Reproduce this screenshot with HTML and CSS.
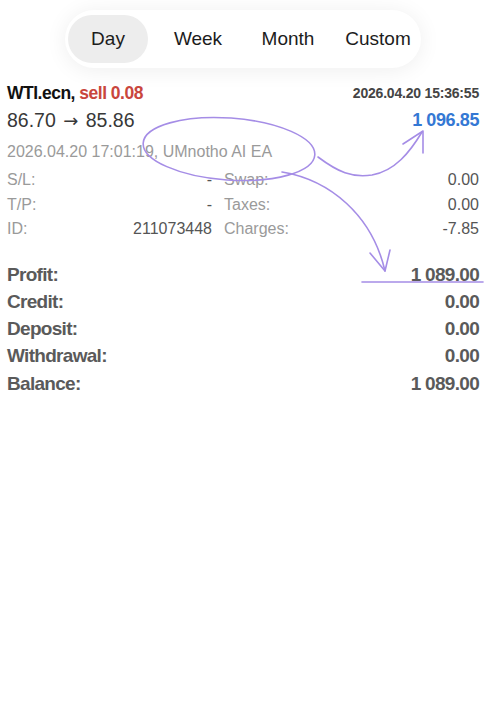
FILE: index.html
```html
<!DOCTYPE html>
<html>
<head>
<meta charset="utf-8">
<link rel="stylesheet" href="styles.css">
</head>
<body>
<div class="page">
  <div class="seg-wrap">
    <div class="seg">
      <div class="seg-item active">Day</div>
      <div class="seg-item">Week</div>
      <div class="seg-item">Month</div>
      <div class="seg-item">Custom</div>
    </div>
  </div>

  <div class="info">
    <div class="row row1">
      <div class="sym">WTI.ecn, <span class="sell">sell 0.08</span></div>
      <div class="date">2026.04.20 15:36:55</div>
    </div>
    <div class="row row2">
      <div class="prices">86.70 <span class="arrow">→</span> 85.86</div>
      <div class="pl">1 096.85</div>
    </div>
    <div class="row3">2026.04.20 17:01:19, UMnotho AI EA</div>

    <div class="details">
      <div class="drow">
        <div class="dl">S/L:</div><div class="dv">-</div>
        <div class="dl2">Swap:</div><div class="dv2">0.00</div>
      </div>
      <div class="drow">
        <div class="dl">T/P:</div><div class="dv">-</div>
        <div class="dl2">Taxes:</div><div class="dv2">0.00</div>
      </div>
      <div class="drow">
        <div class="dl">ID:</div><div class="dv">211073448</div>
        <div class="dl2">Charges:</div><div class="dv2">-7.85</div>
      </div>
    </div>

    <div class="summary">
      <div class="srow"><span>Profit:</span><span>1 089.00</span></div>
      <div class="srow"><span>Credit:</span><span>0.00</span></div>
      <div class="srow"><span>Deposit:</span><span>0.00</span></div>
      <div class="srow"><span>Withdrawal:</span><span>0.00</span></div>
      <div class="srow"><span>Balance:</span><span>1 089.00</span></div>
    </div>
  </div>

  <svg class="annot" width="486" height="720" viewBox="0 0 486 720" fill="none" stroke="#a58de6" stroke-width="1.6" stroke-linecap="round" stroke-linejoin="round">
    <ellipse cx="229" cy="149" rx="86" ry="31" transform="rotate(4 229 149)"/>
    <path d="M318 157 C 338 172, 352 178, 372 175 C 395 171, 410 152, 422 132"/>
    <path d="M403 144 L 423 131 L 423 153"/>
    <path d="M282 172 C 330 180, 372 215, 385 271"/>
    <path d="M370 253 L 385 271 L 390 250"/>
    <path d="M362 282 L 483 282"/>
  </svg>
</div>
</body>
</html>
```

FILE: styles.css
```css
html, body {
  margin: 0;
  padding: 0;
  background: #ffffff;
}

body {
  font-family: "Liberation Sans", Arial, sans-serif;
  color: #333;
}

.page {
  position: relative;
  width: 486px;
  height: 720px;
  overflow: hidden;
}

.seg-wrap {
  padding-top: 10px;
  display: flex;
  justify-content: flex-start;
  padding-left: 65px;
}

.seg {
  display: flex;
  gap: 10px;
  padding: 5px 3px;
  background: #fff;
  border-radius: 29px;
  box-shadow: 0 2px 22px rgba(0, 0, 0, 0.07);
}

.seg-item {
  width: 80px;
  height: 48px;
  line-height: 48px;
  text-align: center;
  font-size: 19px;
  color: #1c1c1c;
  border-radius: 24px;
}

.seg-item.active {
  background: #ededed;
}

.info {
  margin-top: 14px;
  padding: 0 7px;
}

.row {
  display: flex;
  justify-content: space-between;
  align-items: center;
}

.row1 {
  height: 22px;
}

.sym {
  font-size: 17.5px;
  font-weight: bold;
  color: #111;
  letter-spacing: -0.5px;
}

.sell {
  color: #c9463d;
}

.date {
  font-size: 14px;
  font-weight: bold;
  color: #444;
  letter-spacing: -0.2px;
}

.row2 {
  height: 32px;
}

.prices {
  font-size: 19.5px;
  color: #383838;
}

.arrow {
  display: inline-block;
  font-family: "DejaVu Sans", sans-serif;
  font-size: 18px;
  margin: 0 2px;
}

.pl {
  font-size: 18px;
  font-weight: bold;
  color: #3478d4;
  letter-spacing: -0.4px;
}

.row3 {
  margin-top: 4px;
  height: 24px;
  line-height: 24px;
  font-size: 16px;
  color: #9a9a9a;
}

.details {
  margin-top: 4px;
}

.drow {
  display: flex;
  height: 24.5px;
  line-height: 24.5px;
  font-size: 16px;
}

.dl {
  color: #9a9a9a;
  width: 60px;
}

.dv {
  width: 145px;
  text-align: right;
  color: #555;
}

.dl2 {
  margin-left: 12px;
  color: #9a9a9a;
  flex: 1;
}

.dv2 {
  color: #555;
  text-align: right;
}

.summary {
  margin-top: 19px;
}

.srow {
  display: flex;
  justify-content: space-between;
  height: 27.3px;
  line-height: 27.3px;
  font-weight: bold;
  font-size: 19px;
  letter-spacing: -0.7px;
  color: #5a5a5a;
}

.annot {
  position: absolute;
  left: 0;
  top: 0;
  pointer-events: none;
}
```
